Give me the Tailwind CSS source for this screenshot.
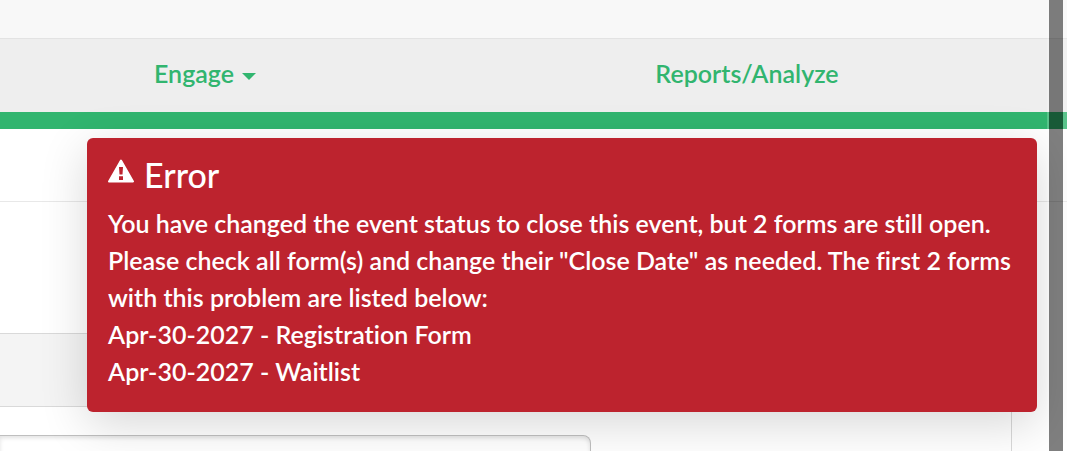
<!DOCTYPE html>
<html lang="en">
  <head>
    <meta charset="UTF-8">
    <meta name="viewport" content="width=device-width, initial-scale=1.0">
    <title>Event Status</title>
    <script src="https://cdn.jsdelivr.net/npm/@tailwindcss/browser@4"></script>
  </head>
  <body class="relative h-screen overflow-hidden bg-white font-['Lato',sans-serif] font-semibold [font-variant-ligatures:none]">
    <header class="h-[39px] border-b border-[#e3e3e3] bg-[#f8f8f8]"></header>
    <nav class="border-b-[17px] border-[#31b56f] bg-[#eeeeee]">
      <ul class="-ml-[66px] mr-[49px] grid grid-cols-2 text-[25px] leading-[36px] text-[#31b56f]">
        <li class="flex justify-center pt-4 pb-[21px]">
          <button type="button" class="flex items-center gap-2">
            Engage
            <svg class="mt-[6px] h-[7px] w-[14px]" viewBox="0 0 14 7" fill="currentColor" aria-hidden="true"><path d="M0 0h14L7 7z"/></svg>
          </button>
        </li>
        <li class="flex justify-center pt-4 pb-[21px]"><a href="#">Reports/Analyze</a></li>
      </ul>
    </nav>

    <main>
      <div class="h-[73px] border-b border-[#e8e8e8]"></div>
      <div class="h-[131px]"></div>
      <section class="mr-[55px] border-t border-r border-[#d9d9d9]">
        <div class="h-[73px] border-b border-[#d9d9d9] bg-[#f4f4f4]"></div>
        <div class="pt-7">
          <input type="text" aria-label="Event name" class="h-16 w-[591px] max-w-full rounded-r-lg border border-l-0 border-[#bfbfbf] bg-white px-3 text-[25px] shadow-[inset_0_2px_4px_rgba(0,0,0,0.12)]">
        </div>
      </section>
    </main>

    <!-- Error toast -->
    <div role="alert" class="absolute top-[138px] right-[30px] left-[87px] rounded-[6px] bg-[#bd232e] px-[21px] pt-[17px] pb-[22px] text-white shadow-[0_12px_48px_rgba(0,0,0,0.16)]">
      <div class="flex items-start gap-[10px]">
        <svg class="mt-1 h-6 w-[26px]" viewBox="0 0 26 24" aria-hidden="true">
          <path fill="#fff" stroke="#fff" stroke-width="2" stroke-linejoin="round" d="M13 1.500L25 22.500H1z"/>
          <path fill="#bd232e" d="M11 8h4l-.5 7.500h-3zM11 17.300h4v3.700h-4z"/>
        </svg>
        <h2 class="text-[34px] leading-[40px] font-medium">Error</h2>
      </div>
      <p class="mt-[10px] text-[25px] leading-[37px]">
        You have changed the event status to close this event, but 2 forms are still open. Please check all form(s) and change their "Close Date" as needed. The first 2 forms with this problem are listed below:<br>
        Apr-30-2027 - Registration Form<br>
        Apr-30-2027 - Waitlist
      </p>
    </div>

    <!-- Scrollbar -->
    <div class="absolute inset-y-0 right-0 w-5 border-r-4 border-l-2 border-white/20 bg-clip-padding">
      <div class="h-full bg-black/50"></div>
    </div>
  </body>
</html>
